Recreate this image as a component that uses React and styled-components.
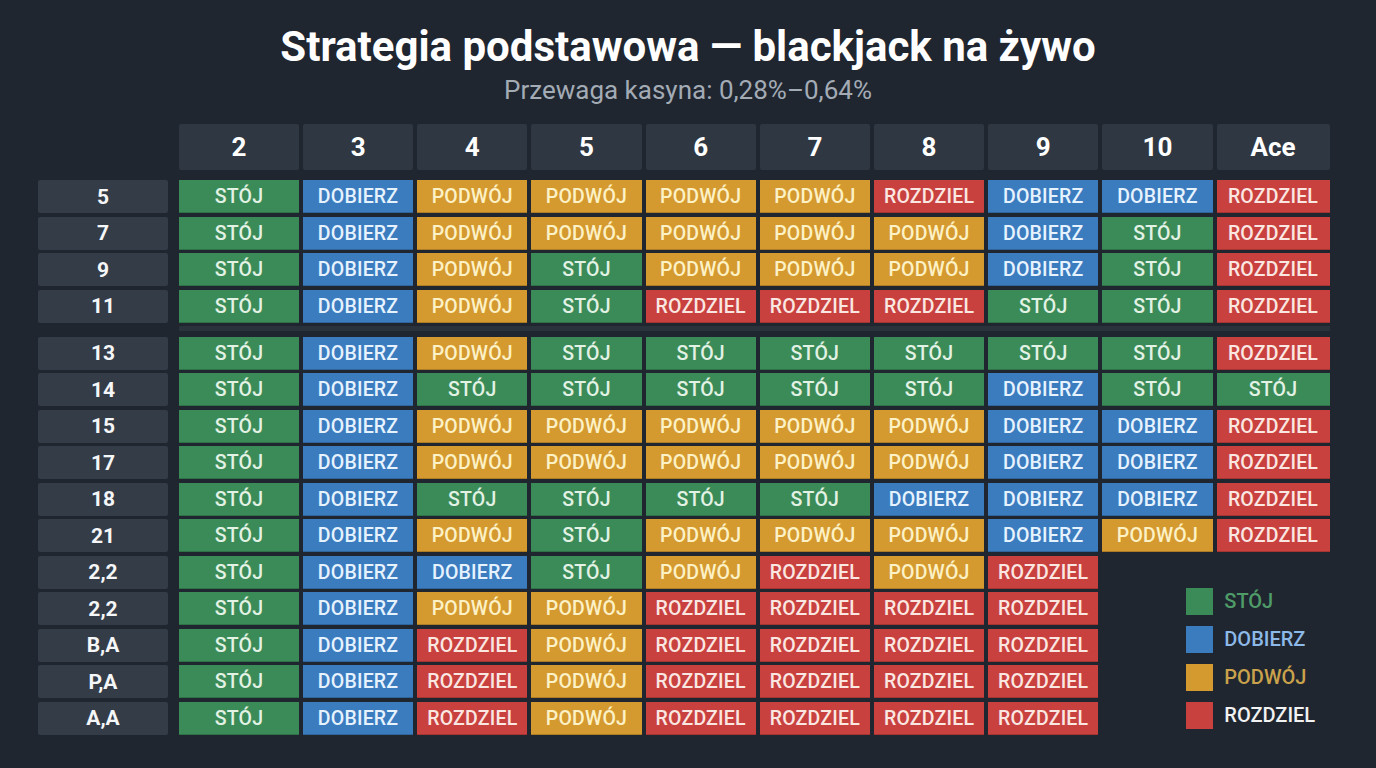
import React from "react";
import styled, { createGlobalStyle } from "styled-components";

const GlobalStyle = createGlobalStyle`
  body {
    margin: 0;
    background: #1f2630;
    font-family: Roboto, "Liberation Sans", sans-serif;
  }
`;

const ACTIONS = {
  S: { label: "STÓJ", bg: "#3b8b58", fg: "#e2f2e4", legend: "#4f9c69" },
  D: { label: "DOBIERZ", bg: "#3b7cbf", fg: "#e6f3ff", legend: "#8db9e8" },
  P: { label: "PODWÓJ", bg: "#d4992f", fg: "#fdf1c6", legend: "#c9a24b" },
  R: { label: "ROZDZIEL", bg: "#c8413f", fg: "#fbe7e2", legend: "#f2f2f2" },
};

const DEALER = ["2", "3", "4", "5", "6", "7", "8", "9", "10", "Ace"];

const TOP = [
  ["5", "SDPPPPRDDR"],
  ["7", "SDPPPPPDSR"],
  ["9", "SDPSPPPDSR"],
  ["11", "SDPSRRRSSR"],
];

const BOTTOM = [
  ["13", "SDPSSSSSSR"],
  ["14", "SDSSSSSDSS"],
  ["15", "SDPPPPPDDR"],
  ["17", "SDPPPPPDDR"],
  ["18", "SDSSSSDDDR"],
  ["21", "SDPSPPPDPR"],
  ["2,2", "SDDSPRPR"],
  ["2,2", "SDPPRRRR"],
  ["B,A", "SDRPRRRR"],
  ["P,A", "SDRPRRRR"],
  ["A,A", "SDRPRRRR"],
];

const Page = styled.div`
  padding: 22px 0 0 38px;
  min-height: 746px;
`;

const Title = styled.h1`
  margin: 0 38px 0 0;
  text-align: center;
  color: #ffffff;
  font-size: 42px;
  font-weight: 700;
  line-height: 50px;
`;

const Subtitle = styled.div`
  margin: 3px 38px 0 0;
  text-align: center;
  color: #a3abb5;
  font-size: 26px;
  line-height: 30px;
`;

const Board = styled.div`
  margin-top: 19px;
  display: grid;
  grid-template-columns: 137px 120px repeat(8, 110.2px) 113px;
  column-gap: 4px;
  row-gap: 3.5px;
`;

const Corner = styled.div`
  margin-bottom: 6.5px;
`;

const HeadCell = styled.div`
  height: 46px;
  margin-bottom: 6.5px;
  display: flex;
  align-items: center;
  justify-content: center;
  background: #2f3742;
  border-radius: 2px;
  color: #ffffff;
  font-size: 26px;
  font-weight: 700;
`;

const RowLabel = styled.div`
  grid-column: 1;
  height: 33px;
  margin-right: 7px;
  display: flex;
  align-items: center;
  justify-content: center;
  background: #343c48;
  border-radius: 2px;
  color: #f4f6f8;
  font-size: 21px;
  font-weight: 700;
`;

const Cell = styled.div`
  height: 33px;
  display: flex;
  align-items: center;
  justify-content: center;
  background: ${(p) => p.$bg};
  color: ${(p) => p.$fg};
  box-shadow: inset 0 -1px 0 rgba(0, 0, 0, 0.18);
  font-size: 19.5px;
  font-weight: 500;
  letter-spacing: 0.2px;
`;

const Divider = styled.div`
  grid-column: 2 / -1;
  height: 5px;
  margin-bottom: 2px;
  background: #2a323c;
`;

const Legend = styled.div`
  grid-column: 10 / 12;
  grid-row: 13 / 18;
  align-self: end;
  display: flex;
  flex-direction: column;
  gap: 11px;
  padding: 0 0 6px 84px;
`;

const LegendItem = styled.div`
  display: flex;
  align-items: center;
  gap: 11px;
  color: ${(p) => p.$color};
  font-size: 20px;
  font-weight: 500;
`;

const Swatch = styled.span`
  width: 27px;
  height: 27px;
  background: ${(p) => p.$bg};
`;

function Row({ label, codes }) {
  return (
    <>
      <RowLabel>{label}</RowLabel>
      {codes.split("").map((c, i) => (
        <Cell key={i} $bg={ACTIONS[c].bg} $fg={ACTIONS[c].fg}>
          {ACTIONS[c].label}
        </Cell>
      ))}
    </>
  );
}

export default function App() {
  return (
    <Page>
      <GlobalStyle />
      <Title>Strategia podstawowa — blackjack na żywo</Title>
      <Subtitle>Przewaga kasyna: 0,28%–0,64%</Subtitle>
      <Board>
        <Legend>
          {["S", "D", "P", "R"].map((k) => (
            <LegendItem key={k} $color={ACTIONS[k].legend}>
              <Swatch $bg={ACTIONS[k].bg} />
              {ACTIONS[k].label}
            </LegendItem>
          ))}
        </Legend>
        <Corner />
        {DEALER.map((d) => (
          <HeadCell key={d}>{d}</HeadCell>
        ))}
        {TOP.map(([label, codes], i) => (
          <Row key={"t" + i} label={label} codes={codes} />
        ))}
        <div />
        <Divider />
        {BOTTOM.map(([label, codes], i) => (
          <Row key={"b" + i} label={label} codes={codes} />
        ))}
      </Board>
    </Page>
  );
}
